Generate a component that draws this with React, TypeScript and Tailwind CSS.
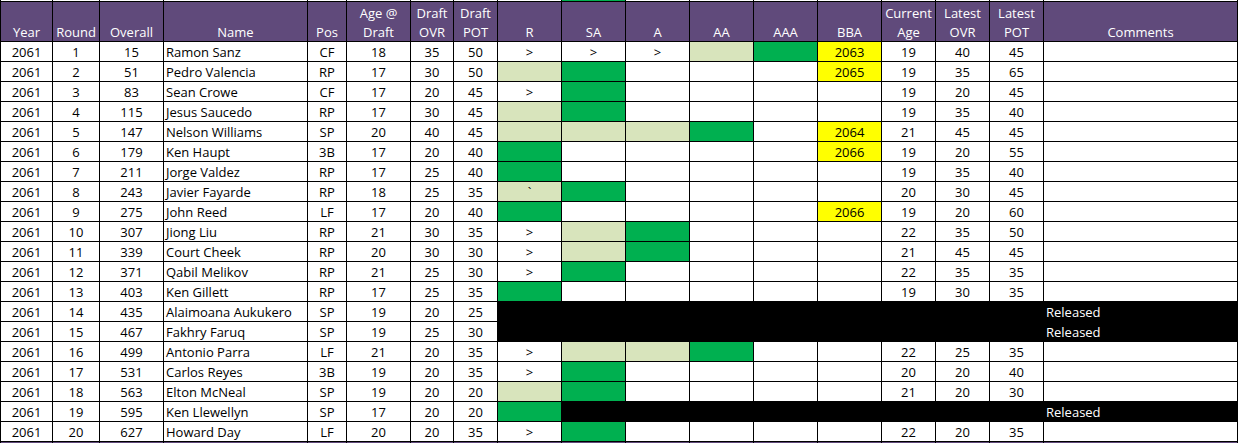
import React from "react";

type Row = {
  round: number;
  overall: number;
  name: string;
  pos: string;
  age: number;
  dOvr: number;
  dPot: number;
  stages: string; // R SA A AA AAA: "." empty, ">" arrow, "l" light green, "g" green, "`" light green with tick
  bba?: string;
  cur?: [number, number, number];
  released?: number; // first stage column that is blacked out
};

const rows: Row[] = [
  { round: 1, overall: 15, name: "Ramon Sanz", pos: "CF", age: 18, dOvr: 35, dPot: 50, stages: ">>>lg", bba: "2063", cur: [19, 40, 45] },
  { round: 2, overall: 51, name: "Pedro Valencia", pos: "RP", age: 17, dOvr: 30, dPot: 50, stages: "lg...", bba: "2065", cur: [19, 35, 65] },
  { round: 3, overall: 83, name: "Sean Crowe", pos: "CF", age: 17, dOvr: 20, dPot: 45, stages: ">g...", cur: [19, 20, 45] },
  { round: 4, overall: 115, name: "Jesus Saucedo", pos: "RP", age: 17, dOvr: 30, dPot: 45, stages: "lg...", cur: [19, 35, 40] },
  { round: 5, overall: 147, name: "Nelson Williams", pos: "SP", age: 20, dOvr: 40, dPot: 45, stages: "lllg.", bba: "2064", cur: [21, 45, 45] },
  { round: 6, overall: 179, name: "Ken Haupt", pos: "3B", age: 17, dOvr: 20, dPot: 40, stages: "g....", bba: "2066", cur: [19, 20, 55] },
  { round: 7, overall: 211, name: "Jorge Valdez", pos: "RP", age: 17, dOvr: 25, dPot: 40, stages: "g....", cur: [19, 35, 40] },
  { round: 8, overall: 243, name: "Javier Fayarde", pos: "RP", age: 18, dOvr: 25, dPot: 35, stages: "`g...", cur: [20, 30, 45] },
  { round: 9, overall: 275, name: "John Reed", pos: "LF", age: 17, dOvr: 20, dPot: 40, stages: "g....", bba: "2066", cur: [19, 20, 60] },
  { round: 10, overall: 307, name: "Jiong Liu", pos: "RP", age: 21, dOvr: 30, dPot: 35, stages: ">lg..", cur: [22, 35, 50] },
  { round: 11, overall: 339, name: "Court Cheek", pos: "RP", age: 20, dOvr: 30, dPot: 30, stages: ">lg..", cur: [21, 45, 45] },
  { round: 12, overall: 371, name: "Qabil Melikov", pos: "RP", age: 21, dOvr: 25, dPot: 30, stages: ">g...", cur: [22, 35, 35] },
  { round: 13, overall: 403, name: "Ken Gillett", pos: "RP", age: 17, dOvr: 25, dPot: 35, stages: "g....", cur: [19, 30, 35] },
  { round: 14, overall: 435, name: "Alaimoana Aukukero", pos: "SP", age: 19, dOvr: 20, dPot: 25, stages: ".....", released: 0 },
  { round: 15, overall: 467, name: "Fakhry Faruq", pos: "SP", age: 19, dOvr: 25, dPot: 30, stages: ".....", released: 0 },
  { round: 16, overall: 499, name: "Antonio Parra", pos: "LF", age: 21, dOvr: 20, dPot: 35, stages: ">llg.", cur: [22, 25, 35] },
  { round: 17, overall: 531, name: "Carlos Reyes", pos: "3B", age: 19, dOvr: 20, dPot: 35, stages: ">g...", cur: [20, 20, 40] },
  { round: 18, overall: 563, name: "Elton McNeal", pos: "SP", age: 19, dOvr: 20, dPot: 20, stages: "lg...", cur: [21, 20, 30] },
  { round: 19, overall: 595, name: "Ken Llewellyn", pos: "SP", age: 17, dOvr: 20, dPot: 20, stages: "g....", released: 1 },
  { round: 20, overall: 627, name: "Howard Day", pos: "LF", age: 20, dOvr: 20, dPot: 35, stages: ">g...", cur: [22, 20, 35] },
];

const headers: string[][] = [
  ["Year"], ["Round"], ["Overall"], ["Name"], ["Pos"], ["Age @", "Draft"], ["Draft", "OVR"], ["Draft", "POT"],
  ["R"], ["SA"], ["A"], ["AA"], ["AAA"], ["BBA"], ["Current", "Age"], ["Latest", "OVR"], ["Latest", "POT"], ["Comments"],
];

const cell = "flex items-center justify-center leading-[19px] pt-px";

function StageCell({ code, black }: { code: string; black: boolean }) {
  if (black) return <div className="bg-black" />;
  if (code === "g") return <div className="bg-[#00b050]" />;
  if (code === "l") return <div className="bg-[#d8e4bc]" />;
  if (code === "`") return <div className={`${cell} bg-[#d8e4bc]`}>`</div>;
  if (code === ">") return <div className={`${cell} bg-white`}>&gt;</div>;
  return <div className="bg-white" />;
}

export default function App() {
  return (
    <div className="bg-white">
      <div className="grid w-[1238px] grid-cols-[51px_46px_63px_143px_38px_63px_42px_43px_63px_63px_63px_63px_63px_63px_53px_53px_53px_193px] grid-rows-[1px_39px_repeat(20,19px)_1px] gap-px bg-black px-px font-['Open_Sans',sans-serif] text-[13px] text-black">
        {headers.map((_, i) => (
          <div key={`top-${i}`} className={i === 9 ? "bg-[#00b050]" : "bg-white"} />
        ))}
        {headers.map((lines, i) => (
          <div key={`h-${i}`} className="flex flex-col items-center justify-end overflow-hidden bg-[#604a7b] leading-[19px] text-white">
            {lines.map((l) => (
              <span key={l} className="translate-y-px">{l}</span>
            ))}
          </div>
        ))}
        {rows.map((r) => {
          const rel = r.released !== undefined;
          return (
            <React.Fragment key={r.round}>
              <div className={`${cell} bg-white`}>2061</div>
              <div className={`${cell} bg-white`}>{r.round}</div>
              <div className={`${cell} bg-white`}>{r.overall}</div>
              <div className="flex items-center bg-white pl-[2px] pt-px leading-[19px]">{r.name}</div>
              <div className={`${cell} bg-white`}>{r.pos}</div>
              <div className={`${cell} bg-white`}>{r.age}</div>
              <div className={`${cell} bg-white`}>{r.dOvr}</div>
              <div className={`${cell} bg-white`}>{r.dPot}</div>
              {r.stages.split("").map((c, i) => (
                <StageCell key={i} code={c} black={rel && i >= (r.released ?? 0)} />
              ))}
              {rel ? (
                <>
                  <div className="bg-black" />
                  <div className="bg-black" />
                  <div className="bg-black" />
                  <div className="bg-black" />
                  <div className="flex items-center bg-black pl-[2px] pt-px leading-[19px] text-white">Released</div>
                </>
              ) : (
                <>
                  <div className={`${cell} ${r.bba ? "bg-[#ffff00]" : "bg-white"}`}>{r.bba}</div>
                  <div className={`${cell} bg-white`}>{r.cur?.[0]}</div>
                  <div className={`${cell} bg-white`}>{r.cur?.[1]}</div>
                  <div className={`${cell} bg-white`}>{r.cur?.[2]}</div>
                  <div className="bg-white" />
                </>
              )}
            </React.Fragment>
          );
        })}
        {headers.map((_, i) => (
          <div key={`b-${i}`} className="bg-[#604a7b]" />
        ))}
      </div>
    </div>
  );
}
